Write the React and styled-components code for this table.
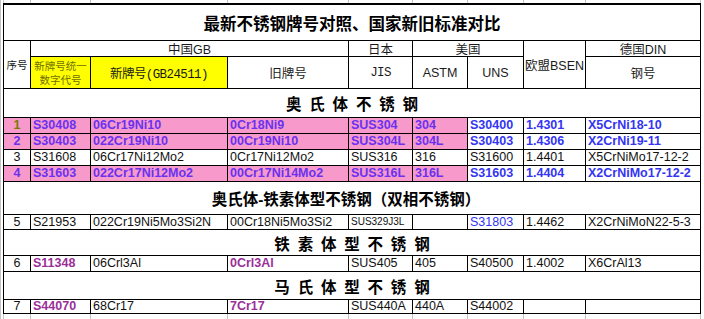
import React from "react";
import styled, { createGlobalStyle } from "styled-components";

const COLS = "26px 59px 136px 120px 63px 54px 55px 61px 114px";
const GRID_LINE = "#c4c4c4";

const colors = {
  k: "#111111",
  v: "#6a32f0",
  b: "#3434f4",
  p: "#9a2f9a",
  o: "#7a7a00",
};

const sections = [
  {
    title: "奥 氏 体 不 锈 钢",
    height: 28,
    rows: [
      {
        no: "1",
        noColor: "o",
        pink: true,
        height: 15,
        cells: [
          ["S30408", "v", 1], ["06Cr19Ni10", "v", 1], ["0Cr18Ni9", "v", 1],
          ["SUS304", "v", 1], ["304", "v", 1], ["S30400", "b", 1],
          ["1.4301", "b", 1], ["X5CrNi18-10", "b", 1],
        ],
      },
      {
        no: "2",
        noColor: "v",
        pink: true,
        height: 15,
        cells: [
          ["S30403", "v", 1], ["022Cr19Ni10", "v", 1], ["00Cr19Ni10", "v", 1],
          ["SUS304L", "v", 1], ["304L", "v", 1], ["S30403", "b", 1],
          ["1.4306", "b", 1], ["X2CrNi19-11", "b", 1],
        ],
      },
      {
        no: "3",
        height: 15,
        cells: [
          ["S31608"], ["06Cr17Ni12Mo2"], ["0Cr17Ni12Mo2"], ["SUS316"],
          ["316"], ["S31600"], ["1.4401"], ["X5CrNiMo17-12-2"],
        ],
      },
      {
        no: "4",
        noColor: "v",
        pink: true,
        height: 15,
        cells: [
          ["S31603", "v", 1], ["022Cr17Ni12Mo2", "v", 1], ["00Cr17Ni14Mo2", "v", 1],
          ["SUS316L", "v", 1], ["316L", "v", 1], ["S31603", "b", 1],
          ["1.4404", "b", 1], ["X2CrNiMo17-12-2", "b", 1],
        ],
      },
    ],
  },
  {
    title: "奥氏体-铁素体型不锈钢（双相不锈钢）",
    tight: true,
    height: 32,
    rows: [
      {
        no: "5",
        height: 14,
        cells: [
          ["S21953"], ["022Cr19Ni5Mo3Si2N"], ["00Cr18Ni5Mo3Si2"],
          ["SUS329J3L", "k", 0, true], [""], ["S31803", "b"], ["1.4462"],
          ["X2CrNiMoN22-5-3"],
        ],
      },
    ],
  },
  {
    title: "铁 素 体 型 不 锈 钢",
    height: 25,
    rows: [
      {
        no: "6",
        height: 15,
        cells: [
          ["S11348", "p", 1], ["06Crl3Al"], ["0Crl3Al", "p", 1], ["SUS405"],
          ["405"], ["S40500"], ["1.4002"], ["X6CrAl13"],
        ],
      },
    ],
  },
  {
    title: "马 氏 体 型 不 锈 钢",
    height: 27,
    rows: [
      {
        no: "7",
        height: 13,
        cells: [
          ["S44070", "p", 1], ["68Cr17"], ["7Cr17", "p", 1], ["SUS440A"],
          ["440A"], ["S44002"], [""], [""],
        ],
      },
    ],
  },
];

const rowHeights = [35, 15, 31];
sections.forEach((s) => {
  rowHeights.push(s.height);
  s.rows.forEach((r) => rowHeights.push(r.height));
});

export default function App() {
  return (
    <>
      <GlobalStyle />
      <Page>
        <Strip $height={3}>
          {Array.from({ length: 9 }).map((_, i) => (
            <StripCell key={i} />
          ))}
        </Strip>
        <Table style={{ gridTemplateRows: rowHeights.map((h) => h + "px").join(" ") }}>
          <Title>最新不锈钢牌号对照、国家新旧标准对比</Title>

          <Head $col="1" $row="2 / span 2" $small>序号</Head>
          <Head $col="2 / span 3" $row="2">中国GB</Head>
          <Head $col="5" $row="2">日本</Head>
          <Head $col="6 / span 2" $row="2">美国</Head>
          <Head $col="8" $row="2 / span 2">欧盟BSEN</Head>
          <Head $col="9" $row="2">德国DIN</Head>

          <CodeHead>
            新牌号统一
            <br />
            数字代号
          </CodeHead>
          <Head $col="3" $row="3" $bg="#ffff00" $mono>新牌号(GB24511)</Head>
          <Head $col="4" $row="3">旧牌号</Head>
          <Head $col="5" $row="3" $mono>JIS</Head>
          <Head $col="6" $row="3">ASTM</Head>
          <Head $col="7" $row="3">UNS</Head>
          <Head $col="9" $row="3">钢号</Head>

          {sections.map((s) => (
            <React.Fragment key={s.title}>
              <Section $tight={s.tight}>{s.title}</Section>
              {s.rows.map((r) => (
                <React.Fragment key={r.no}>
                  <Cell
                    $center
                    $pink={r.pink}
                    $color={colors[r.noColor || "k"]}
                    $bold={!!r.noColor}
                  >
                    {r.no}
                  </Cell>
                  {r.cells.map(([text, c = "k", bold, small], i) => (
                    <Cell
                      key={i}
                      $pink={r.pink && i < 5}
                      $color={colors[c]}
                      $bold={!!bold}
                      $small={small}
                    >
                      {text}
                    </Cell>
                  ))}
                </React.Fragment>
              ))}
            </React.Fragment>
          ))}
        </Table>
        <Strip $grow>
          {Array.from({ length: 9 }).map((_, i) => (
            <StripCell key={i} />
          ))}
        </Strip>
      </Page>
    </>
  );
}

const GlobalStyle = createGlobalStyle`
  html, body {
    margin: 0;
    padding: 0;
    background: #ffffff;
  }
`;

const Page = styled.div`
  width: 704px;
  height: 319px;
  overflow: hidden;
  display: flex;
  flex-direction: column;
  box-sizing: border-box;
  border-left: 1px solid ${GRID_LINE};
  padding-left: 2px;
  background: #ffffff;
  font-family: "Liberation Sans", "Noto Sans CJK SC", sans-serif;
`;

const Strip = styled.div`
  display: grid;
  grid-template-columns: ${COLS};
  column-gap: 1px;
  width: 698px;
  box-sizing: border-box;
  padding: 0 1px;
  background: ${GRID_LINE};
  height: ${({ $height }) => ($height ? $height + "px" : "auto")};
  flex: ${({ $grow }) => ($grow ? 1 : "none")};
`;

const StripCell = styled.div`
  background: #ffffff;
`;

const Table = styled.div`
  display: grid;
  grid-template-columns: ${COLS};
  gap: 1px;
  width: 698px;
  box-sizing: border-box;
  background: #000000;
  border: 1px solid #000000;
  border-top-width: 2px;
`;

const Title = styled.div`
  grid-column: 1 / -1;
  grid-row: 1;
  background: #ffffff;
  display: flex;
  align-items: center;
  justify-content: center;
  font-family: "Noto Sans CJK SC", sans-serif;
  font-weight: 700;
  font-size: 16.5px;
  color: #000000;
`;

const Head = styled.div`
  grid-column: ${({ $col }) => $col};
  grid-row: ${({ $row }) => $row};
  background: ${({ $bg }) => $bg || "#ffffff"};
  display: flex;
  align-items: center;
  justify-content: center;
  font-family: ${({ $mono }) =>
    $mono
      ? `"Liberation Mono", "Noto Sans CJK SC", monospace`
      : `"Liberation Sans", "Noto Sans CJK SC", sans-serif`};
  letter-spacing: ${({ $mono }) => ($mono ? "-0.6px" : "0")};
  font-size: ${({ $small }) => ($small ? "10.5px" : "12.5px")};
  color: #1a1a1a;
  white-space: nowrap;
`;

const CodeHead = styled.div`
  grid-column: 2;
  grid-row: 3;
  background: #ffff00;
  display: flex;
  align-items: center;
  justify-content: center;
  text-align: center;
  font-family: "Noto Sans CJK SC", sans-serif;
  font-size: 10.5px;
  line-height: 14px;
  color: #6f6f00;
`;

const Section = styled.div`
  grid-column: 1 / -1;
  background: #ffffff;
  display: flex;
  align-items: center;
  justify-content: center;
  padding-right: ${({ $tight }) => ($tight ? "12px" : "0")};
  font-family: "Liberation Sans", "Noto Sans CJK SC", sans-serif;
  font-weight: 700;
  font-size: 15.5px;
  word-spacing: ${({ $tight }) => ($tight ? "0" : "3.5px")};
  white-space: pre;
  color: #000000;
`;

const Cell = styled.div`
  background: ${({ $pink }) => ($pink ? "#f799cb" : "#ffffff")};
  color: ${({ $color }) => $color};
  font-weight: ${({ $bold }) => ($bold ? 700 : 400)};
  font-size: ${({ $small }) => ($small ? "10px" : "12.5px")};
  display: flex;
  align-items: center;
  justify-content: ${({ $center }) => ($center ? "center" : "flex-start")};
  padding-left: ${({ $center }) => ($center ? "0" : "2px")};
  white-space: nowrap;
  overflow: hidden;
  line-height: 1;
`;
